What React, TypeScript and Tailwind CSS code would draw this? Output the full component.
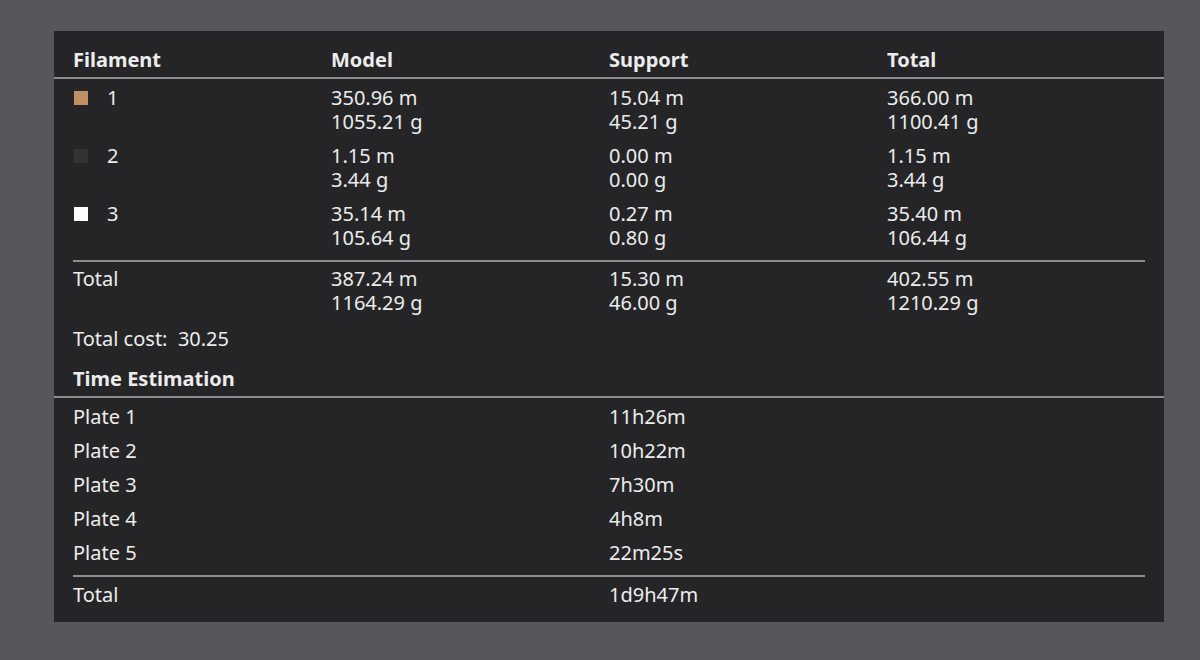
const filaments = [
  { id: "1", color: "bg-[#c08f64]", model: ["350.96 m", "1055.21 g"], support: ["15.04 m", "45.21 g"], total: ["366.00 m", "1100.41 g"] },
  { id: "2", color: "bg-[#333335]", model: ["1.15 m", "3.44 g"], support: ["0.00 m", "0.00 g"], total: ["1.15 m", "3.44 g"] },
  { id: "3", color: "bg-white", model: ["35.14 m", "105.64 g"], support: ["0.27 m", "0.80 g"], total: ["35.40 m", "106.44 g"] },
];

const plates = [
  ["Plate 1", "11h26m"],
  ["Plate 2", "10h22m"],
  ["Plate 3", "7h30m"],
  ["Plate 4", "4h8m"],
  ["Plate 5", "22m25s"],
];

const cols = "grid grid-cols-[258px_278px_278px_1fr]";

function Cell({ lines }: { lines: string[] }) {
  return (
    <div className="flex flex-col">
      {lines.map((l) => (
        <span key={l}>{l}</span>
      ))}
    </div>
  );
}

export default function App() {
  return (
    <div className="h-[660px] w-[1200px] bg-[#57565c] pl-[54px] pt-[31px] font-['Noto_Sans',sans-serif] text-[20px] leading-[24px] text-[#ececec]">
      <div className="h-[591px] w-[1110px] bg-[#252527]">
        <div className={`${cols} h-[48px] border-b-2 border-[#8d8d90] px-[19px] pt-[17px] font-bold`}>
          <span>Filament</span>
          <span>Model</span>
          <span>Support</span>
          <span>Total</span>
        </div>

        <div className="flex flex-col gap-[10px] px-[19px] pt-[7px]">
          {filaments.map((f) => (
            <div key={f.id} className={cols}>
              <div className="flex items-start gap-[19px]">
                <span className={`mt-[5px] ml-px h-[14px] w-[14px] ${f.color}`} />
                <span>{f.id}</span>
              </div>
              <Cell lines={f.model} />
              <Cell lines={f.support} />
              <Cell lines={f.total} />
            </div>
          ))}
        </div>

        <div className="mx-[19px] mt-[10px] border-t-2 border-[#8d8d90] pt-[5px]">
          <div className={cols}>
            <span>Total</span>
            <Cell lines={["387.24 m", "1164.29 g"]} />
            <Cell lines={["15.30 m", "46.00 g"]} />
            <Cell lines={["402.55 m", "1210.29 g"]} />
          </div>
          <div className="mt-[12px]">Total cost:&nbsp; 30.25</div>
          <div className="mt-[16px] font-bold">Time Estimation</div>
        </div>

        <div className="mt-[5px] border-t-2 border-[#8d8d90] px-[19px] pt-[7px]">
          {plates.map(([name, time]) => (
            <div key={name} className={`${cols} h-[34px]`}>
              <span>{name}</span>
              <span />
              <span>{time}</span>
            </div>
          ))}
          <div className={`${cols} border-t-2 border-[#8d8d90] pt-[6px]`}>
            <span>Total</span>
            <span />
            <span>1d9h47m</span>
          </div>
        </div>
      </div>
    </div>
  );
}
